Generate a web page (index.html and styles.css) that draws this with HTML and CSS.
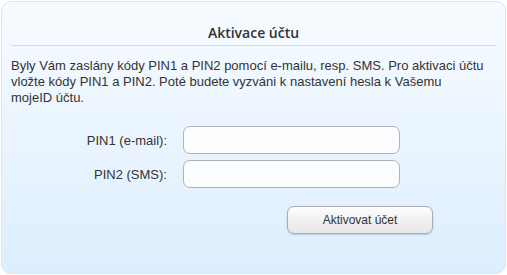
FILE: index.html
```html
<!DOCTYPE html>
<html lang="cs">

<head>
    <meta charset="UTF-8" />
    <meta name="viewport" content="width=device-width, initial-scale=1" />
    <title>Aktivace účtu</title>
    <link rel="stylesheet" href="styles.css">
</head>

<body>
    <div class="panel">
        <h2 class="title">Aktivace účtu</h2>
        <p class="info">Byly Vám zaslány kódy PIN1 a PIN2 pomocí e-mailu, resp. SMS. Pro aktivaci účtu vložte kódy PIN1 a PIN2. Poté budete vyzváni k nastavení hesla k Vašemu mojeID&nbsp;účtu.</p>
        <form class="form" onsubmit="return false">
            <label for="pin1">PIN1 (e-mail):</label>
            <input type="text" id="pin1" />
            <label for="pin2">PIN2 (SMS):</label>
            <input type="text" id="pin2" />
            <div class="actions">
                <button type="submit">Aktivovat účet</button>
            </div>
        </form>
    </div>
</body>

</html>
```

FILE: styles.css
```css
body {
    margin: 0;
    background: #fff;
    font-family: "Liberation Sans", Arial, sans-serif;
    color: #333;
}

.panel {
    margin: 1px;
    width: 505px;
    height: 273px;
    border: 1px solid #d9e7f5;
    border-radius: 10px;
    padding: 0 9px;
    box-sizing: border-box;
    background: linear-gradient(to bottom, #f7fbff, #ddeefe);
    overflow: hidden;
}

.title {
    margin: 21px 0 0;
    padding-bottom: 2px;
    font-family: "Open Sans", sans-serif;
    font-size: 14px;
    font-weight: 600;
    line-height: 20px;
    text-align: center;
    color: #333;
    border-bottom: 1px solid #dcdcdc;
}

.info {
    margin: 12px 0 0;
    font-size: 13px;
    line-height: 16px;
}

.form {
    margin-top: 20px;
    display: grid;
    grid-template-columns: 156px 217px;
    column-gap: 16px;
    row-gap: 6px;
    align-items: center;
}

.form label {
    font-size: 13px;
    text-align: right;
}

.form input {
    height: 28px;
    box-sizing: border-box;
    border: 1px solid #aeb3b8;
    border-radius: 7px;
    background: #fcfdff;
    padding: 0 6px;
    font-size: 13px;
}

.actions {
    grid-column: 1 / 3;
    margin-top: 12px;
    padding-left: 276px;
}

.actions button {
    width: 146px;
    height: 28px;
    border: 1px solid #a9abad;
    border-radius: 7px;
    background: linear-gradient(to bottom, #fdfdfd, #e6e6e6);
    box-shadow: 0 1px 2px rgba(0, 0, 0, 0.15);
    font-family: "Liberation Sans", Arial, sans-serif;
    font-size: 12px;
    color: #333;
    cursor: pointer;
}
```
